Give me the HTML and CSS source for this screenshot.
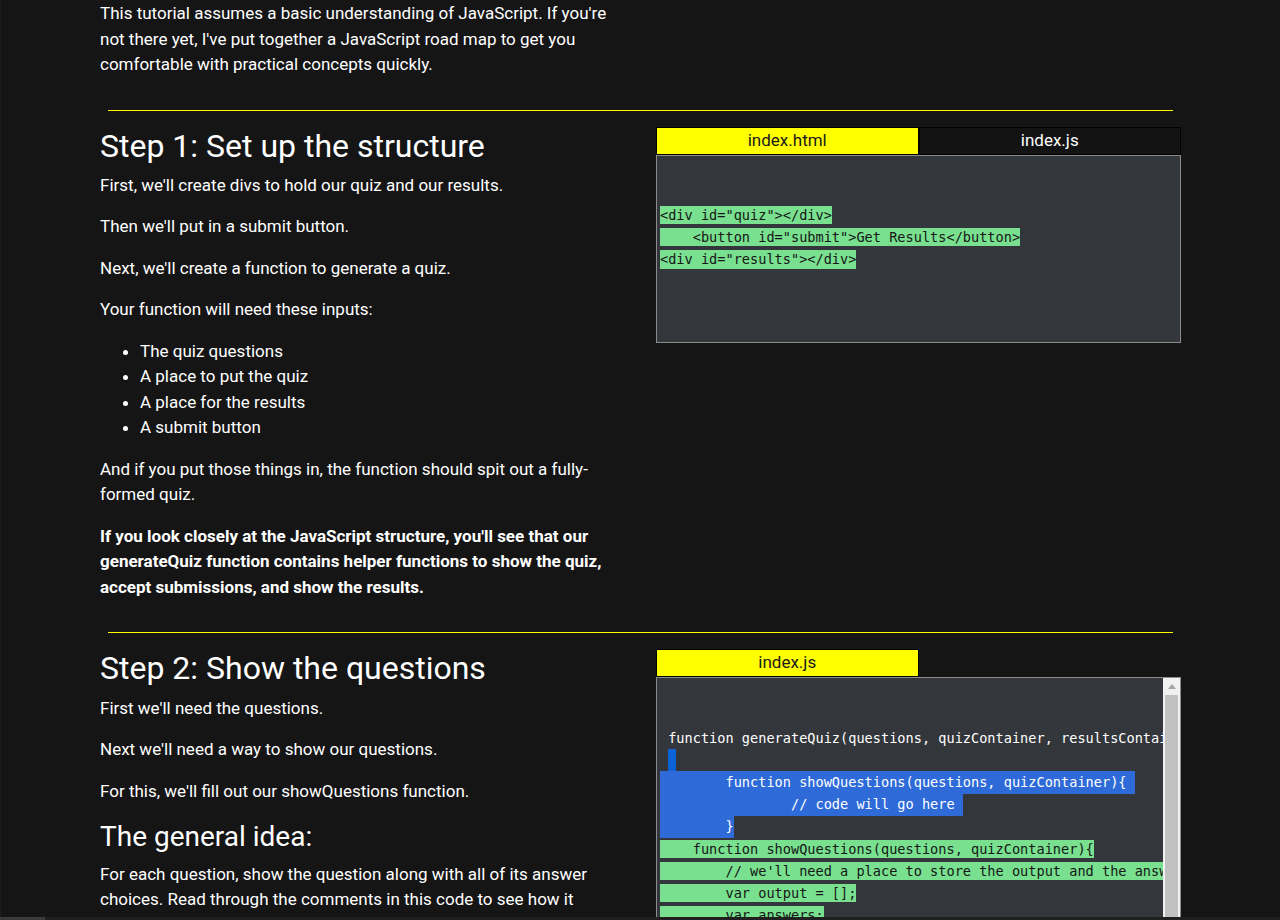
FILE: index.html
```html
<!DOCTYPE html>
<html lang="en">
<head>
<meta charset="utf-8">
<title>JavaScript Quiz Tutorial</title>
<link rel="stylesheet" href="styles.css">
</head>
<body>
<div class="page">
  <section class="row">
    <div class="col-text">
      <p>This tutorial assumes a basic understanding of JavaScript. If you're not there yet, I've put together a JavaScript road map to get you comfortable with practical concepts quickly.</p>
    </div>
  </section>

  <hr class="divider">

  <section class="row">
    <div class="col-text">
      <h2>Step 1: Set up the structure</h2>
      <p>First, we'll create divs to hold our quiz and our results.</p>
      <p>Then we'll put in a submit button.</p>
      <p>Next, we'll create a function to generate a quiz.</p>
      <p>Your function will need these inputs:</p>
      <ul>
        <li>The quiz questions</li>
        <li>A place to put the quiz</li>
        <li>A place for the results</li>
        <li>A submit button</li>
      </ul>
      <p>And if you put those things in, the function should spit out a fully-formed quiz.</p>
      <p class="strong">If you look closely at the JavaScript structure, you'll see that our generateQuiz function contains helper functions to show the quiz, accept submissions, and show the results.</p>
    </div>
    <div class="code">
      <div class="tabs">
        <div class="tab active">index.html</div>
        <div class="tab">index.js</div>
      </div>
      <div class="editor">
        <div class="code-area">
<div class="ln"><span class="g">&lt;div id="quiz"&gt;&lt;/div&gt;</span></div>
<div class="ln"><span class="g">    &lt;button id="submit"&gt;Get Results&lt;/button&gt;</span></div>
<div class="ln"><span class="g">&lt;div id="results"&gt;&lt;/div&gt;</span></div>
        </div>
      </div>
    </div>
  </section>

  <hr class="divider">

  <section class="row">
    <div class="col-text">
      <h2>Step 2: Show the questions</h2>
      <p>First we'll need the questions.</p>
      <p>Next we'll need a way to show our questions.</p>
      <p>For this, we'll fill out our showQuestions function.</p>
      <h3>The general idea:</h3>
      <p>For each question, show the question along with all of its answer choices. Read through the comments in this code to see how it works.</p>
    </div>
    <div class="code">
      <div class="tabs">
        <div class="tab active">index.js</div>
      </div>
      <div class="editor tall">
        <div class="code-area">
<div class="ln"> function generateQuiz(questions, quizContainer, resultsContainer, submitButton){</div>
<div class="ln"> <span class="s s-alt"> </span></div>
<div class="ln"><span class="s">        function showQuestions(questions, quizContainer){ </span></div>
<div class="ln"><span class="s">                // code will go here </span></div>
<div class="ln"><span class="s">        }</span></div>
<div class="ln"><span class="g">    function showQuestions(questions, quizContainer){</span></div>
<div class="ln"><span class="g">        // we'll need a place to store the output and the answer choices</span></div>
<div class="ln"><span class="g">        var output = [];</span></div>
<div class="ln"><span class="g">        var answers;</span></div>
<div class="ln"><span class="g">        // for each question...</span></div>
        </div>
        <div class="scrollbar">
          <div class="sb-btn"><svg width="8" height="5" viewBox="0 0 8 5"><path d="M4 0 L8 5 L0 5 Z" fill="#a3a3a3"/></svg></div>
          <div class="sb-thumb"></div>
        </div>
      </div>
    </div>
  </section>
</div>
<div class="hscroll"><div class="hscroll-thumb"></div></div>
</body>
</html>
```

FILE: styles.css
```css
html, body {
  height: 920px;
  overflow: hidden;
}

body {
  margin: 0;
  background: #151515;
  color: #ffffff;
  font-family: Roboto, "Noto Sans", Arial, sans-serif;
  font-size: 17px;
  line-height: 25.5px;
  border-left: 1px solid #1d1d1d;
}

.page {
  padding: 1px 99px 0 99px;
}

.row {
  display: grid;
  grid-template-columns: 516px 525px;
  column-gap: 40px;
  align-items: start;
}

.col-text h2 {
  font-size: 32px;
  line-height: 38.4px;
  font-weight: 400;
  margin: 0 0 8px;
}

.col-text h3 {
  font-size: 28px;
  line-height: 33.6px;
  font-weight: 400;
  margin: 16px 0 8px;
}

.col-text p {
  margin: 0 0 16px;
}

.col-text .strong {
  font-weight: 700;
}

.col-text ul {
  margin: 0 0 16px;
  padding-left: 40px;
}

.divider {
  border: 0;
  height: 1px;
  background: #ffff00;
  margin: 16px 8px;
}

/* code panel */
.tabs {
  display: flex;
}

.tab {
  width: 50%;
  box-sizing: border-box;
  height: 28px;
  line-height: 25px;
  border: 1px solid #000000;
  background: #131313;
  color: #ffffff;
  text-align: center;
  font-size: 17px;
}

.tab.active {
  background: #ffff00;
  color: #1a1a1a;
}

.editor {
  display: flex;
  border: 1px solid #8c8c8c;
  background: #33363b;
}

.editor.tall {
  height: 320px;
}

.code-area {
  flex: 1;
  min-width: 0;
  overflow: hidden;
  padding: 48.5px 0 71px 3px;
  font-family: "DejaVu Sans Mono", "Liberation Mono", monospace;
  font-size: 13.6px;
  color: #ffffff;
}

.ln {
  height: 22.2px;
  line-height: 22.2px;
  white-space: pre;
}

.g {
  background: #78e08f;
  color: #161616;
  padding: 1.2px 0;
}

.s {
  background: #2e6bd8;
  color: #ffffff;
  padding: 3.3px 0;
}

.s.s-alt {
  background: #0c63d6;
}

.scrollbar {
  width: 17px;
  flex: 0 0 17px;
  background: #f1f1f1;
  display: flex;
  flex-direction: column;
}

.sb-btn {
  height: 17px;
  display: flex;
  align-items: center;
  justify-content: center;
}

.sb-thumb {
  flex: 1;
  margin: 0 2px 0 2px;
  background: #c1c1c1;
}

/* page's horizontal scrollbar strip at the bottom edge */
.hscroll {
  position: fixed;
  left: 0;
  right: 0;
  bottom: 0;
  height: 3px;
  background: #202020;
}

.hscroll-thumb {
  width: 45px;
  height: 100%;
  background: #3a3a3a;
}
```
